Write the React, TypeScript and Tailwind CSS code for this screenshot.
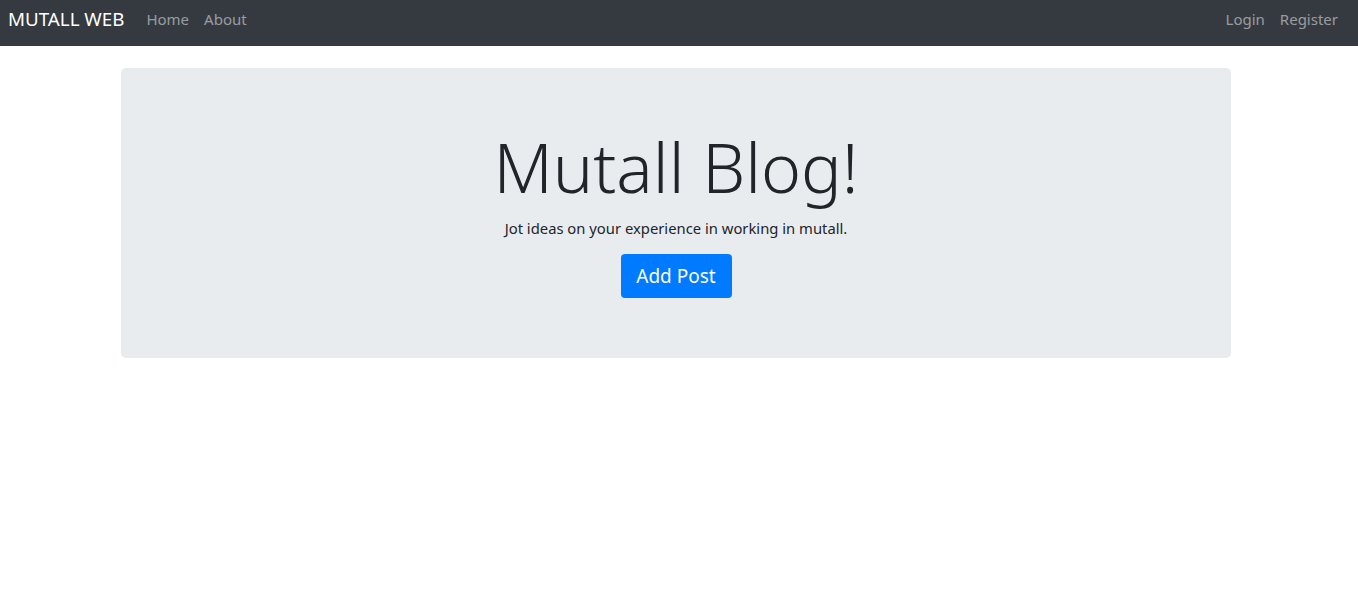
export default function App() {
  return (
    <div className="min-h-[597px] bg-white font-['Noto_Sans',sans-serif] text-[#212529]">
      {/* navbar */}
      <nav className="flex h-[46px] items-center justify-between bg-[#343a40] pr-[20px] pb-[7px] pl-2">
        <div className="flex items-center">
          <a className="text-[18.75px] text-white">MUTALL WEB</a>
          <div className="ml-[22px] flex gap-[15px] text-[15px] text-white/50">
            <a>Home</a>
            <a>About</a>
          </div>
        </div>
        <div className="flex gap-[15px] text-[15px] text-white/50">
          <a>Login</a>
          <a>Register</a>
        </div>
      </nav>

      {/* jumbotron */}
      <div className="mx-auto mt-[22px] w-[1110px] -translate-x-[3px]">
        <div className="flex h-[290px] flex-col items-center rounded-[5px] bg-[#e9ecef] pt-[58px]">
          <h1 className="text-[68px] leading-[1.2] font-light">Mutall Blog!</h1>
          <p className="mt-[9px] text-[14.8px]">Jot ideas on your experience in working in mutall.</p>
          <button className="mt-[15px] h-[44px] w-[111px] rounded-[4px] bg-[#007bff] text-[19px] text-white">
            Add Post
          </button>
        </div>
      </div>
    </div>
  );
}
